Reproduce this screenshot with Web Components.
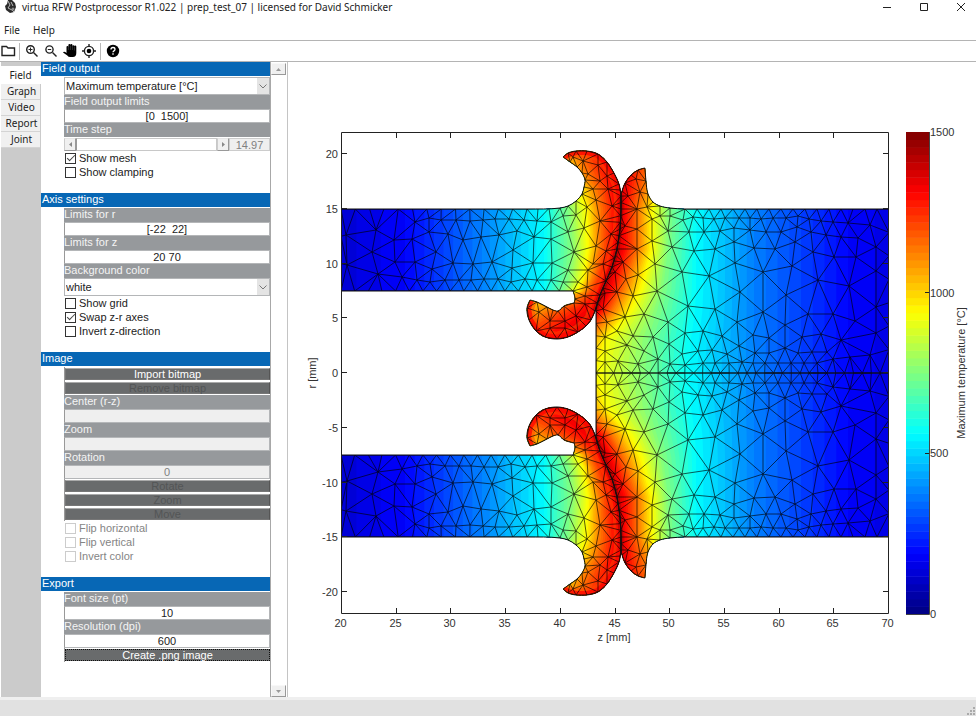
<!DOCTYPE html>
<html lang="en">
<head>
<meta charset="utf-8">
<title>virtua RFW Postprocessor</title>
<style>
html, body { height: 100%; margin: 0; background: #fff; }
body { font: 11px/14px "Liberation Sans", Arial, sans-serif; color: #222; }
</style>
</head>
<body>
<app-window>
  <title-bar slot="top">virtua RFW Postprocessor R1.022 | prep_test_07 | licensed for David Schmicker</title-bar>
  <menu-bar slot="top"></menu-bar>
  <tool-bar slot="top"></tool-bar>
  <side-tabs slot="main"></side-tabs>
  <scroll-pane slot="main">
    <panel-section heading="Field output">
      <drop-field name="Field output" value="Maximum temperature [°C]"></drop-field>
      <text-field label="Field output limits" value="[0  1500]"></text-field>
      <step-slider label="Time step" value="14.97"></step-slider>
      <check-field checked>Show mesh</check-field>
      <check-field>Show clamping</check-field>
    </panel-section>
    <panel-section heading="Axis settings">
      <text-field label="Limits for r" value="[-22  22]"></text-field>
      <text-field label="Limits for z" value="20 70"></text-field>
      <drop-field label="Background color" value="white"></drop-field>
      <check-field>Show grid</check-field>
      <check-field checked>Swap z-r axes</check-field>
      <check-field>Invert z-direction</check-field>
    </panel-section>
    <panel-section heading="Image">
      <push-button>Import bitmap</push-button>
      <push-button disabled>Remove bitmap</push-button>
      <text-field label="Center (r-z)" value="" disabled></text-field>
      <text-field label="Zoom" value="" disabled></text-field>
      <text-field label="Rotation" value="0" disabled></text-field>
      <push-button disabled>Rotate</push-button>
      <push-button disabled>Zoom</push-button>
      <push-button disabled>Move</push-button>
      <check-field disabled>Flip horizontal</check-field>
      <check-field disabled>Flip vertical</check-field>
      <check-field disabled>Invert color</check-field>
    </panel-section>
    <panel-section heading="Export">
      <text-field label="Font size (pt)" value="10"></text-field>
      <text-field label="Resolution (dpi)" value="600"></text-field>
      <push-button default>Create .png image</push-button>
    </panel-section>
  </scroll-pane>
  <field-plot slot="main"></field-plot>
  <status-bar slot="bottom"></status-bar>
</app-window>

<script>
const UI = '"Noto Sans", "Open Sans", sans-serif';

function define(name, render, after) {
  customElements.define(name, class extends HTMLElement {
    connectedCallback() {
      if (this.shadowRoot) return;
      this.attachShadow({ mode: 'open' }).innerHTML =
        '<style>:host,*{box-sizing:border-box}button,input,select{font:inherit;color:inherit;margin:0;padding:0;border:0;border-radius:0;background:none}</style>' + render(this);
      if (after) after(this.shadowRoot, this);
    }
  });
}

define('app-window', () => `
<style>
:host { display: flex; flex-direction: column; min-height: 100vh; }
main { flex: 1; display: flex; align-items: stretch; padding-left: 1px; }
</style>
<slot name="top"></slot><main><slot name="main"></slot></main><slot name="bottom"></slot>`);

define('title-bar', () => `
<style>
:host { display: flex; align-items: center; height: 14px; padding: 0 5px 0 5px; gap: 5px; font: 10px/14px ${UI}; color: #222; }
.logo { width: 12px; height: 14px; flex: none; }
span { flex: 1; white-space: nowrap; }
nav { display: flex; gap: 17px; }
button { width: 20px; height: 14px; display: grid; place-items: center; }
button svg { width: 10px; height: 10px; fill: none; stroke: #222; }
</style>
<svg class="logo" viewBox="0 0 12 14"><path d="M3 0h4l3 3 1 4-2 5-4 1-4-3-1-4 2-2z" fill="#2c2c2c"/><path d="M3 1l2 4-2 3 4 2 2 2M6 2l2 4" fill="none" stroke="#bbb"/><circle cx="8" cy="9" r="1.500" fill="#888"/></svg>
<span><slot></slot></span>
<nav><button aria-label="Minimize"><svg viewBox="0 0 10 10"><path d="M1 5.500h8"/></svg></button>
<button aria-label="Maximize"><svg viewBox="0 0 10 10"><path d="M1.500 1.500h7v7h-7z"/></svg></button>
<button aria-label="Close"><svg viewBox="0 0 10 10"><path d="M1 1l8 8M9 1l-8 8"/></svg></button></nav>`);

define('menu-bar', () => `
<style>
:host { display: flex; gap: 13px; height: 27px; padding: 8px 0 0 4px; font: 10px/16px ${UI}; color: #222; border-bottom: 1px solid #b4b4b4; }
button { height: 16px; }
</style><button>File</button><button>Help</button>`);

define('tool-bar', () => `
<style>
:host { display: flex; align-items: center; height: 21px; border-bottom: 1px solid #b4b4b4; }
button { width: 19px; height: 18px; display: grid; place-items: center; }
button:first-child { width: 19px; padding-right: 6px; }
svg { width: 14px; height: 14px; overflow: visible; }
i { width: 1px; height: 17px; background: #b8b8b8; margin-right: 2px; }
i.two { margin: 0 2px; }
.l { fill: none; stroke: #222; stroke-width: 1.400; }
</style>
<button aria-label="Open"><svg viewBox="0 0 14 14"><path class="l" d="M-1 2.500h4.500l1.500 1.500h6.500v7.500h-12.500z"/></svg></button><i></i>
<button aria-label="Zoom in"><svg viewBox="0 0 14 14"><g class="l"><circle cx="5.500" cy="5.500" r="3.800"/><path d="M8.500 8.500l4 4"/><path d="M3.500 5.500h4M5.500 3.500v4" stroke-width="1"/></g></svg></button>
<button aria-label="Zoom out"><svg viewBox="0 0 14 14"><g class="l"><circle cx="5.500" cy="5.500" r="3.600"/><path d="M8.500 8.500l4 4"/><path d="M3.800 5.500h3.400" stroke-width="1"/></g></svg></button>
<button aria-label="Pan"><svg viewBox="0 0 14 14"><path d="M3.500 9V3q0-1 .9-1t1 .9V1q0-1 1-1t1 1v0q0-1 1-1t1 1v1q.2-.8 1.100-.8t1 .9q.2-.6.900-.6t.900 1v6.500q0 4-3.500 4h-2.500q-2 0-3-1.500L0 8.500q.8-1.500 2.200-.4z" fill="#000"/><path d="M5.400 2.500v3.500M7.400 1.500v4.500M9.400 2v4M11.400 2.500v4" stroke="#777" stroke-width=".4"/></svg></button>
<button aria-label="Data cursor"><svg viewBox="0 0 14 14"><circle class="l" cx="7" cy="7" r="4.600"/><circle cx="7" cy="7" r="2.300" fill="#000"/><path class="l" d="M7 0v2.500M7 11.500V14M0 7h2.500M11.500 7H14"/></svg></button><i class="two"></i>
<button aria-label="Help"><svg viewBox="0 0 14 14"><circle cx="7" cy="7" r="6.200" fill="#000"/><path d="M5 5.500q0-2 2-2t2 1.800q0 1-1 1.600t-1 1.400" fill="none" stroke="#fff" stroke-width="1.300"/><path d="M6.300 9.300h1.400v1.500H6.300z" fill="#fff"/></svg></button>`);

define('side-tabs', () => `
<style>
:host { display: flex; flex-direction: column; width: 40px; flex: none; background: #cbcbcb; font: 10px/16px ${UI}; color: #222; padding-top: 4px; }
button { height: 16px; width: 39px; background: #f0f0f0; border-bottom: 1px solid #d4d4d4; line-height: 15px; padding-left: 2px; }
button:nth-child(n+2) { flex: none; }
button[aria-selected=true] { width: 40px; height: 18px; background: #fff; border: 0; line-height: 18px; padding-right: 3px; }
</style>
<button role="tab" aria-selected="true">Field</button><button role="tab">Graph</button><button role="tab">Video</button><button role="tab">Report</button><button role="tab">Joint</button>`);

define('scroll-pane', () => `
<style>
:host { display: flex; width: 247px; flex: none; border-right: 1px solid #c4c4c4; }
.content { flex: 1; display: flex; flex-direction: column; gap: 14px; }
.bar { width: 17px; flex: none; display: flex; flex-direction: column; justify-content: space-between; border-left: 1px solid #a8a8a8; padding-top: 1px; }
.bar button { width: 15px; height: 12px; background: #f0f0f0; border: 1px solid; border-color: #f8f8f8 #999 #999 #f8f8f8; display: grid; place-items: center; }
svg { width: 5px; height: 3px; fill: #999; }
</style>
<div class="content"><slot></slot></div>
<div class="bar"><button aria-label="Scroll up"><svg viewBox="0 0 5 3"><path d="M0 3L2.500 0 5 3z"/></svg></button><button aria-label="Scroll down"><svg viewBox="0 0 5 3"><path d="M0 0h5L2.500 3z"/></svg></button></div>`);

define('panel-section', el => `
<style>
:host { display: block; }
h2 { margin: 0 0 1px; height: 14px; font: inherit; line-height: 13px; background: #0767b5; color: #fff; padding-left: 1px; }
.rows { padding-left: 23px; }
</style><h2>${el.getAttribute('heading')}</h2><div class="rows"><slot></slot></div>`);

const labelCss = 'label{display:block;height:14px;line-height:13px;background:#96999c;color:#f4f4f4;white-space:nowrap}';

define('text-field', el => `
<style>
:host { display: block; }
${labelCss}
input { display: block; width: 100%; height: 14px; line-height: 12px; text-align: center; background: #fff; border: 1px solid #b4b6b8; border-left-color: #999; color: #222; white-space: pre; }
input:disabled { background: #efefef; color: #808080; }
</style><label for="f">${el.getAttribute('label')}</label><input id="f" value="${el.getAttribute('value')}" ${el.hasAttribute('disabled') ? 'disabled' : ''}>`);

define('drop-field', el => `
<style>
:host { display: block; }
${labelCss}
div { position: relative; height: 18px; border: 1px solid #b4b6b8; background: #fff; display: flex; }
select { appearance: none; flex: 1; height: 16px; line-height: 16px; padding-left: 1px; color: #222; }
span { position: absolute; right: 0; top: 0; bottom: 0; width: 12px; background: #e4e4e4; display: grid; place-items: center; pointer-events: none; }
svg { width: 8px; height: 5px; fill: none; stroke: #777; }
</style>${el.hasAttribute('label') ? `<label for="s">${el.getAttribute('label')}</label>` : ''}
<div><select id="s" aria-label="${el.getAttribute('label') || el.getAttribute('name')}"><option>${el.getAttribute('value')}</option></select><span><svg viewBox="0 0 8 5"><path d="M.5 .5L4 4 7.500 .5"/></svg></span></div>`);

define('step-slider', el => `
<style>
:host { display: block; }
${labelCss}
div { display: flex; height: 14px; padding: 1px 0 0; }
button { width: 12px; flex: none; background: #f0f0f0; border: 1px solid; border-color: #e4e4e4 #999 #999 #ccc; display: grid; place-items: center; }
svg { width: 3px; height: 5px; fill: #888; }
#r { appearance: none; flex: 1; min-width: 0; background: #fff; border: 1px solid #c8c8c8; border-left-color: #999; }
#r::-webkit-slider-thumb { appearance: none; width: 1px; height: 11px; }
output { width: 41px; flex: none; text-align: center; background: #efefef; border: 1px solid #ccc; color: #808080; line-height: 12px; }
</style><label for="r">${el.getAttribute('label')}</label>
<div><button aria-label="Step back"><svg viewBox="0 0 3 5"><path d="M3 0v5L0 2.500z"/></svg></button><input id="r" type="range" value="0"><button aria-label="Step forward"><svg viewBox="0 0 3 5"><path d="M0 0v5l3-2.500z"/></svg></button><output for="r">${el.getAttribute('value')}</output></div>`);

define('check-field', el => `
<style>
:host { display: block; height: 14px; }
label { display: flex; align-items: center; gap: 3px; height: 14px; padding-left: 1px; color: ${el.hasAttribute('disabled') ? '#858585' : '#222'}; }
input { appearance: none; width: 11px; height: 11px; border: 1px solid #333; background: #fff; display: grid; place-items: center; }
input:disabled { border-color: #ccc; }
input:checked::before { content: ""; width: 7px; height: 3px; border: solid #444; border-width: 0 0 1px 1px; transform: rotate(-45deg); margin-bottom: 2px; }
</style><label><input type="checkbox" ${el.hasAttribute('checked') ? 'checked' : ''} ${el.hasAttribute('disabled') ? 'disabled' : ''}><slot></slot></label>`);

define('push-button', el => `
<style>
:host { display: block; height: 14px; padding: 1px 0; border-left: 1px solid #999; }
button { display: block; width: 100%; height: 12px; line-height: 10px; background: #696b6c; color: #fff; border: 1px solid #777; border-top-color: #aaa; border-right-color: #555; }
button:disabled { color: #535556; }
button.d { border: 1px dotted #111; }
</style><button class="${el.hasAttribute('default') ? 'd' : ''}" ${el.hasAttribute('disabled') ? 'disabled' : ''}><slot></slot></button>`);

define('status-bar', () => `
<style>:host { display: flex; justify-content: flex-end; align-items: flex-end; height: 19px; background: #e1e1e1; border-top: 3px solid #efefef; }
svg { width: 10px; height: 10px; fill: #aaa; }</style>
<svg viewBox="0 0 10 10"><path d="M7 7h2v2H7zM7 4h2v2H7zM4 7h2v2H4zM7 1h2v2H7zM4 4h2v2H4zM1 7h2v2H1z"/></svg>`);

/* ---------- finite element plot ---------- */
const AX = { x0: 341 };
const pairs = s => s.trim().split(/\s+/).map(p => p.split(',').map(Number));

/* upper half of each part; the lower half is mirrored */
const INTERFACE = pairs('621,197 621,210 620,230 617,250 612,268 606,282 600,296 595,312');
const LEFT_OUT = pairs(`341,210 527,210 560,209 568,207 576,202 582,195 584,188 585,181 582,174 577,168 570,163 563,158
 568,154 576,152 587,152 598,155 607,163 614,174 619,185`).concat(INTERFACE, pairs(`591,321 586,327 578,333 568,338 557,340 545,338 536,332 529,321 527,309 530,301
 537,303 547,308 553,311 558,312 564,307 574,304 575,300 573,292 341,292`));
const RIGHT_OUT = pairs('889,374 596,374 596,312').concat(INTERFACE.slice().reverse(), pairs('622,192 625,184 631,176 638,171 645,169 646,182 648,195 653,203 660,207 670,209 685,210 889,210'));

const LEFT_PTS = pairs(`346,236 376,231 372,253 347,266 378,275 394,241 395,263 412,240 415,223 415,263 402,278 417,281 430,283 432,270 436,253 429,233 429,219
 441,221 448,235 456,221 463,241 453,264 445,281 459,281 471,281 473,265 470,222 483,221 481,238 499,236 495,220 509,220 517,232 513,251 492,263 512,269
 498,280 484,280 511,283 525,280 524,221 534,238 533,264 537,222 551,223 563,217 576,216 568,233 584,229 587,208 551,240 552,264 574,253 596,247 600,222
 596,201 593,190 600,182 608,190 588,175 583,162 598,166 607,177 612,207 611,235 593,265 588,271 568,271 578,283 606,252 603,265 551,281 563,283 537,281
 585,297 587,288 576,317 539,313 550,322 565,322 565,329 550,329 585,305 573,158`);
const RIGHT_PTS = pairs(`636,180 628,197 640,193 637,210 647,208 652,220 637,230 625,227 637,250 652,242 660,217 670,217 668,232 672,248 683,221 693,218 689,233
 694,252 655,265 638,276 682,273 623,263 626,280 615,273 617,293 633,297 657,292 688,307 644,315 625,318 607,323 603,310 668,323 605,294
 605,338 617,332 633,337 653,338 685,334 605,352 618,362 605,363 627,346 644,352 669,345 638,365 658,360 682,355 698,352 670,365 685,366
 703,219 714,220 725,219 739,219 750,219 761,220 773,219 786,219 798,217 809,220 821,222 833,223 848,224 870,226 704,233 720,232 734,229 750,231
 766,233 781,233 797,228 811,233 826,236 841,238 858,239 876,248 715,250 734,243 754,249 775,250 795,243 813,253 834,258 856,258 735,264 763,273 792,267
 709,277 818,281 849,287 876,272 740,293 786,296 715,310 763,313 737,323 785,326 808,315 833,315 855,322 876,308 876,334 703,332 722,337 753,336 769,339
 739,347 802,338 821,335 841,341 712,351 727,355 755,354 769,354 785,349 798,354 812,353 827,353 833,360 850,358 870,356
 703,364 715,364 729,364 742,363 753,364 765,364 778,364 791,364 804,364 817,364`);

function inside([x, y], poly) {
  let c = false;
  for (let i = 0, j = poly.length - 1; i < poly.length; j = i++) {
    const [xi, yi] = poly[i], [xj, yj] = poly[j];
    if ((yi > y) !== (yj > y) && x < (xj - xi) * (y - yi) / (yj - yi) + xi) c = !c;
  }
  return c;
}
function sampleEdge(poly, stepOf) {
  const out = [];
  poly.forEach((a, i) => {
    const b = poly[(i + 1) % poly.length], d = Math.hypot(b[0] - a[0], b[1] - a[1]);
    const n = Math.max(1, Math.round(d / stepOf(a, b)));
    for (let k = 0; k < n; k++) out.push([a[0] + (b[0] - a[0]) * k / n, a[1] + (b[1] - a[1]) * k / n]);
  });
  return out;
}
function circum(a, b, c) {
  const d = 2 * (a[0] * (b[1] - c[1]) + b[0] * (c[1] - a[1]) + c[0] * (a[1] - b[1]));
  const s = p => p[0] * p[0] + p[1] * p[1];
  const x = (s(a) * (b[1] - c[1]) + s(b) * (c[1] - a[1]) + s(c) * (a[1] - b[1])) / d;
  const y = (s(a) * (c[0] - b[0]) + s(b) * (a[0] - c[0]) + s(c) * (b[0] - a[0])) / d;
  return [x, y, (a[0] - x) ** 2 + (a[1] - y) ** 2];
}
/* Bowyer-Watson triangulation, returned as one path of unique edges inside the outline */
function meshPath(outline, inner, stepOf) {
  const pts = sampleEdge(outline, stepOf).concat(inner).map(([x, y], i) => [x + Math.sin(i * 7.3) * 0.01, y + Math.cos(i * 5.1) * 0.01]);
  const n = pts.length;
  pts.push([-9000, -9000], [9000, -9000], [0, 15000]);
  const tri = (i, j, k) => ({ v: [i, j, k], c: circum(pts[i], pts[j], pts[k]) });
  let T = [tri(n, n + 1, n + 2)];
  for (let i = 0; i < n; i++) {
    const [px, py] = pts[i], edges = new Map();
    T = T.filter(t => {
      if ((px - t.c[0]) ** 2 + (py - t.c[1]) ** 2 >= t.c[2]) return true;
      for (let e = 0; e < 3; e++) {
        const a = t.v[e], b = t.v[(e + 1) % 3], key = Math.min(a, b) + '_' + Math.max(a, b);
        edges.has(key) ? edges.set(key, null) : edges.set(key, [a, b]);
      }
      return false;
    });
    edges.forEach(e => { if (e) T.push(tri(e[0], e[1], i)); });
  }
  const seen = new Set(); let d = '';
  T.forEach(t => {
    if (t.v.some(v => v >= n)) return;
    const g = [0, 1].map(q => (pts[t.v[0]][q] + pts[t.v[1]][q] + pts[t.v[2]][q]) / 3);
    if (!inside(g, outline)) return;
    for (let e = 0; e < 3; e++) {
      const a = t.v[e], b = t.v[(e + 1) % 3], key = Math.min(a, b) + '_' + Math.max(a, b);
      if (seen.has(key)) continue;
      seen.add(key);
      d += `M${pts[a].map(v => v.toFixed(1))}L${pts[b].map(v => v.toFixed(1))}`;
    }
  });
  return d;
}

/* closed Catmull-Rom curve through the outline; sharp corners and long straight runs stay straight */
function smooth(p) {
  const n = p.length, at = i => p[(i + n) % n];
  const tangent = i => {
    const a = at(i - 1), b = at(i), c = at(i + 1);
    const u = [b[0] - a[0], b[1] - a[1]], v = [c[0] - b[0], c[1] - b[1]];
    const lu = Math.hypot(...u), lv = Math.hypot(...v);
    const cos = (u[0] * v[0] + u[1] * v[1]) / (lu * lv);
    if (cos < 0.6) return [0, 0];
    const w = [u[0] / lu + v[0] / lv, u[1] / lu + v[1] / lv], lw = Math.hypot(...w);
    return [w[0] / lw, w[1] / lw];
  };
  let d = 'M' + p[0];
  for (let i = 0; i < n; i++) {
    const a = at(i), b = at(i + 1), l = Math.hypot(b[0] - a[0], b[1] - a[1]);
    if (l > 60) { d += 'L' + b; continue; }
    const s = tangent(i), e = tangent(i + 1), k = l / 3;
    d += `C${(a[0] + s[0] * k).toFixed(1)},${(a[1] + s[1] * k).toFixed(1)} ${(b[0] - e[0] * k).toFixed(1)},${(b[1] - e[1] * k).toFixed(1)} ${b}`;
  }
  return d + 'z';
}

function jet(t) {
  const ch = o => Math.round(255 * Math.max(0, Math.min(1, 1.5 - Math.abs(4 * t - o))));
  return `rgb(${ch(3)},${ch(2)},${ch(1)})`;
}
/* rows: [y, x at each normalised temperature in STOPS] */
const STOPS = [0.08, 0.125, 0.25, 0.375, 0.5, 0.625, 0.75, 0.9];
const LEFT_T = [
  [150, 320, 400, 460, 500, 530, 550, 575, 606], [170, 320, 400, 460, 500, 535, 562, 583, 613],
  [190, 330, 405, 480, 530, 558, 579, 595, 617], [210, 335, 405, 482, 544, 568, 586, 599, 619],
  [250, 335, 405, 482, 544, 571, 588, 599, 615], [280, 335, 405, 482, 544, 568, 583, 592, 606],
  [293, 335, 405, 482, 544, 563, 576, 586, 600], [303, 300, 350, 400, 440, 480, 510, 572, 596],
  [312, 300, 340, 380, 420, 450, 490, 545, 592], [345, 300, 340, 380, 400, 420, 440, 480, 556]];
const RIGHT_T = [
  [165, 950, 850, 760, 705, 688, 672, 652, 624], [210, 925, 848, 754, 697, 669, 652, 639, 622],
  [250, 925, 848, 754, 696, 668, 652, 639, 621], [290, 925, 848, 754, 696, 663, 641, 625, 608],
  [312, 925, 848, 754, 695, 657, 630, 613, 597], [340, 925, 848, 754, 691, 648, 606, 588, 570],
  [375, 925, 848, 754, 689, 645, 596, 575, 560]];
function bands(rows, edge) {
  let s = '';
  for (let k = 5; k < 60; k++) {
    const t = k / 64;
    let i = 0; while (i < STOPS.length - 2 && STOPS[i + 1] < t) i++;
    const f = (t - STOPS[i]) / (STOPS[i + 1] - STOPS[i]);
    const p = rows.map(r => [(r[i + 1] + (r[i + 2] - r[i + 1]) * f).toFixed(1), r[0]]);
    s += `<path fill="${jet((k + 0.5) / 64)}" d="M${edge},${rows[0][0]}L${p.join('L')}L${edge},${rows[rows.length - 1][0]}z"/>`;
  }
  return s;
}
const poly = p => 'M' + p.join('L') + 'z';
const FLASH = 'M563,158L568,154L576,152L587,152L598,155L607,163L614,174L619,185L621,200L620,230L612,268L600,296L591,321L578,333L557,340L545,338L536,332L529,321L527,309L530,301';

function plotSvg() {
  const lStep = (a, b) => a[1] === b[1] && Math.abs(a[0] - b[0]) > 100 ? 14 : a[0] === b[0] && a[0] === 341 ? 27 : (a[0] > 618 && a[1] > 180 ? 7 : 11);
  const rStep = (a, b) => a[1] === 374 && b[1] === 374 ? 9 : a[0] === 889 && b[0] === 889 ? 22 : a[1] === b[1] ? 12 : (a[0] < 623 && b[1] < 312 ? 7 : 12);
  const parts = `
  <g id="half">
    <g clip-path="url(#cl)">
      <path d="${poly(LEFT_OUT)}" fill="${jet(0.085)}"/>${bands(LEFT_T, 640)}
      <g fill="none" stroke-linejoin="round">
        <path d="${FLASH}" stroke="#ff4600" stroke-width="14" opacity=".55"/>
        <path d="${FLASH}" stroke="#f00" stroke-width="8" opacity=".75"/>
      </g>
    </g>
    <g clip-path="url(#cr)">
      <path d="${poly(RIGHT_OUT)}" fill="${jet(0.085)}"/>${bands(RIGHT_T, 520)}
    </g>
    <path d="M${INTERFACE.join('L')}" fill="none" stroke="#900" stroke-width="5" stroke-linejoin="round" opacity=".5"/>
    <g fill="none" stroke="#000" stroke-width=".75" opacity=".85">
      <path clip-path="url(#cl)" d="${meshPath(LEFT_OUT, LEFT_PTS, lStep)}"/><path clip-path="url(#cr)" d="${meshPath(RIGHT_OUT, RIGHT_PTS, rStep)}"/>
    </g>
    <path clip-path="url(#top)" d="${smooth(LEFT_OUT)}${smooth(RIGHT_OUT)}" fill="none" stroke="#111"/>
  </g>
  <use href="#half" transform="translate(0 748) scale(1 -1)"/>`;

  let ticks = '', text = '';
  for (let i = 0; i <= 10; i++) {
    const x = Math.round(AX.x0 + i * 54.7) + 0.5;
    if (i && i < 10) ticks += `M${x},615v-6M${x},133v6`;
    text += `<text x="${x - 1}" y="628" text-anchor="middle">${20 + i * 5}</text>`;
  }
  for (let v = -20; v <= 20; v += 5) {
    const y = Math.round(374 - v * 10.95) - 0.5;
    ticks += `M341,${y}h6M889,${y}h-6`;
    text += `<text x="338" y="${y + 4.5}" text-anchor="end">${v}</text>`;
  }
  let bar = '';
  for (let k = 0; k < 64; k++) {
    const a = 615 - 482 * (k + 1) / 64;
    bar += `<rect x="906" y="${a.toFixed(2)}" width="23" height="8" fill="${jet((k + 0.5) / 64)}"/>`;
  }
  return `<svg viewBox="288 63 688 634" role="img" aria-label="Maximum temperature field">
  <defs><clipPath id="cl"><path d="${smooth(LEFT_OUT)}"/></clipPath><clipPath id="cr"><path d="${smooth(RIGHT_OUT)}"/></clipPath>
  <clipPath id="cb"><path d="M906,133h23v482h-23z"/></clipPath><clipPath id="top"><path d="M341,133h548v241h-548z"/></clipPath></defs>
  ${parts}
  <path d="M341.500,133.500H888.500V614.500H341.500z${ticks}" fill="none" stroke="#222"/>
  <g clip-path="url(#cb)">${bar}</g>
  <path d="M906,615.500h23.500V133" fill="none" stroke="#444"/><path d="M925,293.500h4M925,454.500h4" stroke="#222"/>
  <g fill="#333">${text}
    <text x="930" y="137">1500</text><text x="930" y="298">1000</text><text x="930" y="458">500</text><text x="930" y="619">0</text>
    <text x="614" y="642" text-anchor="middle">z [mm]</text>
    <text transform="translate(316 374) rotate(-90)" text-anchor="middle">r [mm]</text>
    <text transform="translate(965 374) rotate(-90)" text-anchor="middle">Maximum temperature [°C]</text>
  </g></svg>`;
}
define('field-plot', () => `
<style>
:host { display: block; flex: 1; min-width: 0; }
svg { display: block; width: 100%; height: auto; font: 11px "Liberation Sans", Arial, sans-serif; }
</style>${plotSvg()}`);
</script>
</body>
</html>
